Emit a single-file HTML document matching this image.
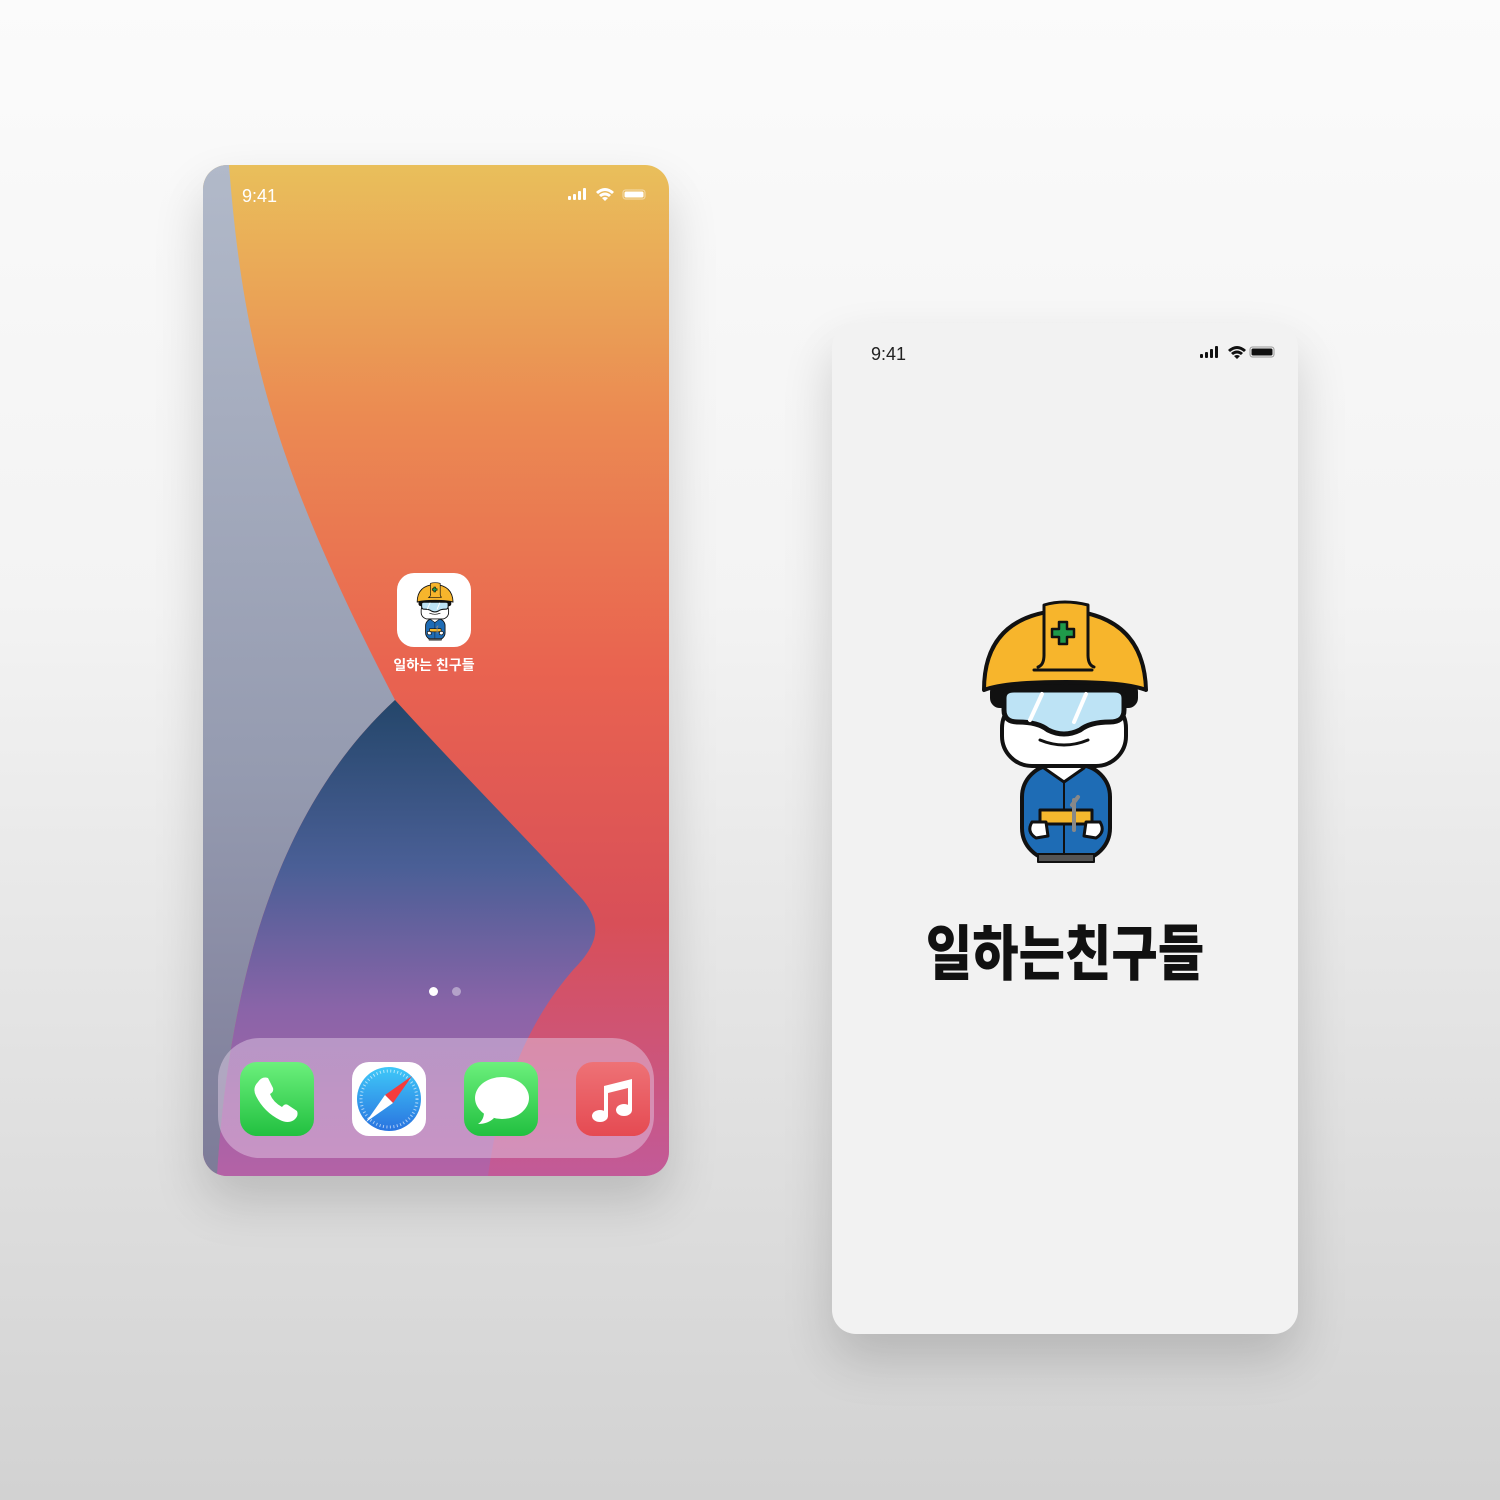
<!DOCTYPE html>
<html><head><meta charset="utf-8"><style>
html,body{margin:0;padding:0}
body{width:1500px;height:1500px;overflow:hidden;background:linear-gradient(#fbfbfb 0%,#f3f3f3 40%,#d2d2d2 100%);position:relative;font-family:"Liberation Sans","Noto Sans CJK KR",sans-serif}
.ph{position:absolute;width:466px;height:1011px;border-radius:24px;overflow:hidden;box-shadow:0 25px 50px rgba(0,0,0,.16)}
.p1{left:203px;top:165px}
.p2{left:832px;top:323px;background:#f2f2f2}
.time{position:absolute;left:39px;top:21px;font-size:18px}
.icon{position:absolute;width:74px;height:74px;border-radius:17px;overflow:hidden}
</style></head><body>
<svg width="0" height="0" style="position:absolute">
<defs>
<symbol id="guy" viewBox="0 0 200 280">
<g stroke="#111" stroke-width="4" stroke-linejoin="round" stroke-linecap="round">
<rect x="62" y="175" width="88" height="95" rx="32" fill="#1e6cb5"/>
<path d="M84 178 L104 192 L124 178 L118 172 L90 172Z" fill="#fff" stroke-width="3"/>
<line x1="104" y1="192" x2="104" y2="268" stroke-width="2"/>
<rect x="80" y="220" width="52" height="14" fill="#f5b82e" stroke-width="3"/>
<path d="M72 232 q-6 10 4 16 l12 -2 l-2 -14z" fill="#fff" stroke-width="3"/>
<path d="M140 232 q6 10 -4 16 l-12 -2 l2 -14z" fill="#fff" stroke-width="3"/>
<path d="M112 215 l6 -8 M114 210 v30" stroke="#888" stroke-width="4"/>
<rect x="78" y="264" width="56" height="8" fill="#555" stroke-width="2"/>
<rect x="42" y="108" width="124" height="68" rx="30" fill="#fff"/>
<path d="M80 150 q24 10 48 0" fill="none" stroke-width="3"/>
<rect x="32" y="94" width="144" height="22" rx="8" fill="#111"/>
<path d="M44 108 q0 -8 10 -8 h100 q10 0 10 8 v12 q0 12 -14 12 q-20 0 -30 8 q-16 8 -32 0 q-10 -8 -30 -8 q-14 0 -14 -12z" fill="#bde3f5" stroke-width="5"/>
<path d="M70 130 l12 -26 M114 132 l12 -28" stroke="#fff" stroke-width="4"/>
<path d="M24 100 q0 -75 80 -80 q80 5 82 80 q-20 -8 -80 -8 q-62 0 -82 8z" fill="#f7b52c"/>
<path d="M84 65 v-50 q20 -6 44 0 v50" fill="#f7b52c" stroke-width="3"/>
<path d="M74 80 h58 M84 65 q0 10 -6 12 M128 65 q0 10 6 12" fill="none" stroke-width="3"/>
<path d="M99 32 h8 v7 h7 v8 h-7 v7 h-8 v-7 h-7 v-8 h7z" fill="#1f9a4a" stroke-width="2.5"/>
</g>
</symbol>
<linearGradient id="bg" x1="0" y1="0" x2="0" y2="1">
<stop offset="0" stop-color="#e9bf5b"/><stop offset=".25" stop-color="#eb8a52"/><stop offset=".5" stop-color="#e96350"/><stop offset=".75" stop-color="#d84f58"/><stop offset="1" stop-color="#c25a98"/></linearGradient>
<linearGradient id="gr" x1="0" y1="0" x2="0" y2="1"><stop offset="0" stop-color="#b1b9c9"/><stop offset=".6" stop-color="#959bb0"/><stop offset="1" stop-color="#7d7b98"/></linearGradient>
<linearGradient id="bl" x1="0" y1="0" x2="0" y2="1"><stop offset="0" stop-color="#24466a"/><stop offset=".35" stop-color="#4a5f96"/><stop offset=".65" stop-color="#8a64a8"/><stop offset="1" stop-color="#b462a6"/></linearGradient>
</defs></svg>

<div class="ph p1">
<svg width="466" height="1011" style="position:absolute;left:0;top:0">
<rect width="466" height="1011" fill="url(#bg)"/>
<path d="M0 0 L26 0 C40 180 70 300 192 535 C100 620 30 760 14 1011 L0 1011Z" fill="url(#gr)"/>
<path d="M192 535 C260 610 330 680 380 735 C400 760 395 780 370 805 C340 840 300 900 285 1011 L14 1011 C30 760 100 620 192 535Z" fill="url(#bl)"/>
</svg>
<div class="time" style="color:#fff">9:41</div>
<svg style="position:absolute;left:365px;top:22px" width="85" height="16">
<g fill="#fff"><rect x="0" y="9" width="3" height="4" rx="1"/><rect x="5" y="7" width="3" height="6" rx="1"/><rect x="10" y="4" width="3" height="9" rx="1"/><rect x="15" y="1" width="3" height="12" rx="1"/>
<path d="M28 5 q9 -8 18 0 l-2 2 q-7 -6 -14 0z M31 8 q6 -5 12 0 l-2 2 q-4 -3 -8 0z M34 11 l3 3 l3 -3 q-3 -2 -6 0z"/>
<rect x="55" y="3" width="22" height="9" rx="2.5" fill="none" stroke="#fff" stroke-opacity=".5"/><rect x="56.5" y="4.5" width="19" height="6" rx="1.5"/></g></svg>
<div class="icon" style="left:194px;top:408px;background:#fff"><svg width="74" height="74" style="position:absolute;left:9px;top:7px"><use href="#guy" width="56" height="62"/></svg></div>
<div style="position:absolute;left:150px;width:162px;top:490px;text-align:center;color:#fff;font-size:14px;font-weight:bold">일하는 친구들</div>
<div style="position:absolute;left:226px;top:822px;width:9px;height:9px;border-radius:50%;background:#fff"></div>
<div style="position:absolute;left:249px;top:822px;width:9px;height:9px;border-radius:50%;background:rgba(255,255,255,.4)"></div>
<div style="position:absolute;left:15px;top:873px;width:436px;height:120px;border-radius:42px;background:rgba(230,210,235,.45)"></div>
<div class="icon" style="left:37px;top:897px;background:linear-gradient(#6cf07c,#22c040)"><svg width="74" height="74"><path d="M18 20 q4 -6 10 -4 l5 10 q1 4 -3 6 q3 8 12 13 q3 -4 6 -2 l9 6 q2 5 -3 9 q-6 4 -14 0 q-16 -8 -24 -24 q-4 -8 2 -14z" fill="#fff"/></svg></div>
<div class="icon" style="left:149px;top:897px;background:#fff"><svg width="74" height="74"><defs><linearGradient id="sf" x1="0" y1="0" x2="0" y2="1"><stop offset="0" stop-color="#3fc8f8"/><stop offset="1" stop-color="#2a74e0"/></linearGradient></defs><circle cx="37" cy="37" r="32" fill="url(#sf)"/><circle cx="37" cy="37" r="28" fill="none" stroke="#fff" stroke-opacity=".6" stroke-width="3" stroke-dasharray="1 2.5"/><path d="M60 14 L41 41 L33 33Z" fill="#f43c3c"/><path d="M14 60 L33 33 L41 41Z" fill="#fff"/></svg></div>
<div class="icon" style="left:261px;top:897px;background:linear-gradient(#6cf07c,#22c040)"><svg width="74" height="74"><ellipse cx="38" cy="36" rx="27" ry="21" fill="#fff"/><path d="M20 50 q0 8 -6 12 q10 0 16 -6z" fill="#fff"/></svg></div>
<div class="icon" style="left:373px;top:897px;background:linear-gradient(#ee7276,#e54a52)"><svg width="74" height="74" fill="#fff"><path d="M28 24 L56 17 V48 h-4 V26 L32 31 V54 h-4Z"/><ellipse cx="24" cy="54" rx="8" ry="6"/><ellipse cx="48" cy="48" rx="8" ry="6"/></svg></div>
</div>

<div class="ph p2">
<div class="time" style="color:#222">9:41</div>
<svg style="position:absolute;left:368px;top:22px" width="85" height="16">
<g fill="#111"><rect x="0" y="9" width="3" height="4" rx="1"/><rect x="5" y="7" width="3" height="6" rx="1"/><rect x="10" y="4" width="3" height="9" rx="1"/><rect x="15" y="1" width="3" height="12" rx="1"/>
<path d="M28 5 q9 -8 18 0 l-2 2 q-7 -6 -14 0z M31 8 q6 -5 12 0 l-2 2 q-4 -3 -8 0z M34 11 l3 3 l3 -3 q-3 -2 -6 0z"/>
<rect x="50" y="2" width="24" height="10" rx="2.5" fill="none" stroke="#111" stroke-opacity=".4"/><rect x="51.5" y="3.5" width="21" height="7" rx="1.5"/></g></svg>
<svg width="200" height="280" style="position:absolute;left:128px;top:267px"><use href="#guy" width="200" height="280"/></svg>
<div style="position:absolute;left:0;width:466px;top:590px;text-align:center;font-family:'Noto Sans CJK KR',sans-serif;font-weight:900;font-size:60px;letter-spacing:0;color:#111;line-height:74px;transform:scaleX(0.84);transform-origin:233px 0;white-space:nowrap">일하는친구들</div>
</div>
</body></html>
